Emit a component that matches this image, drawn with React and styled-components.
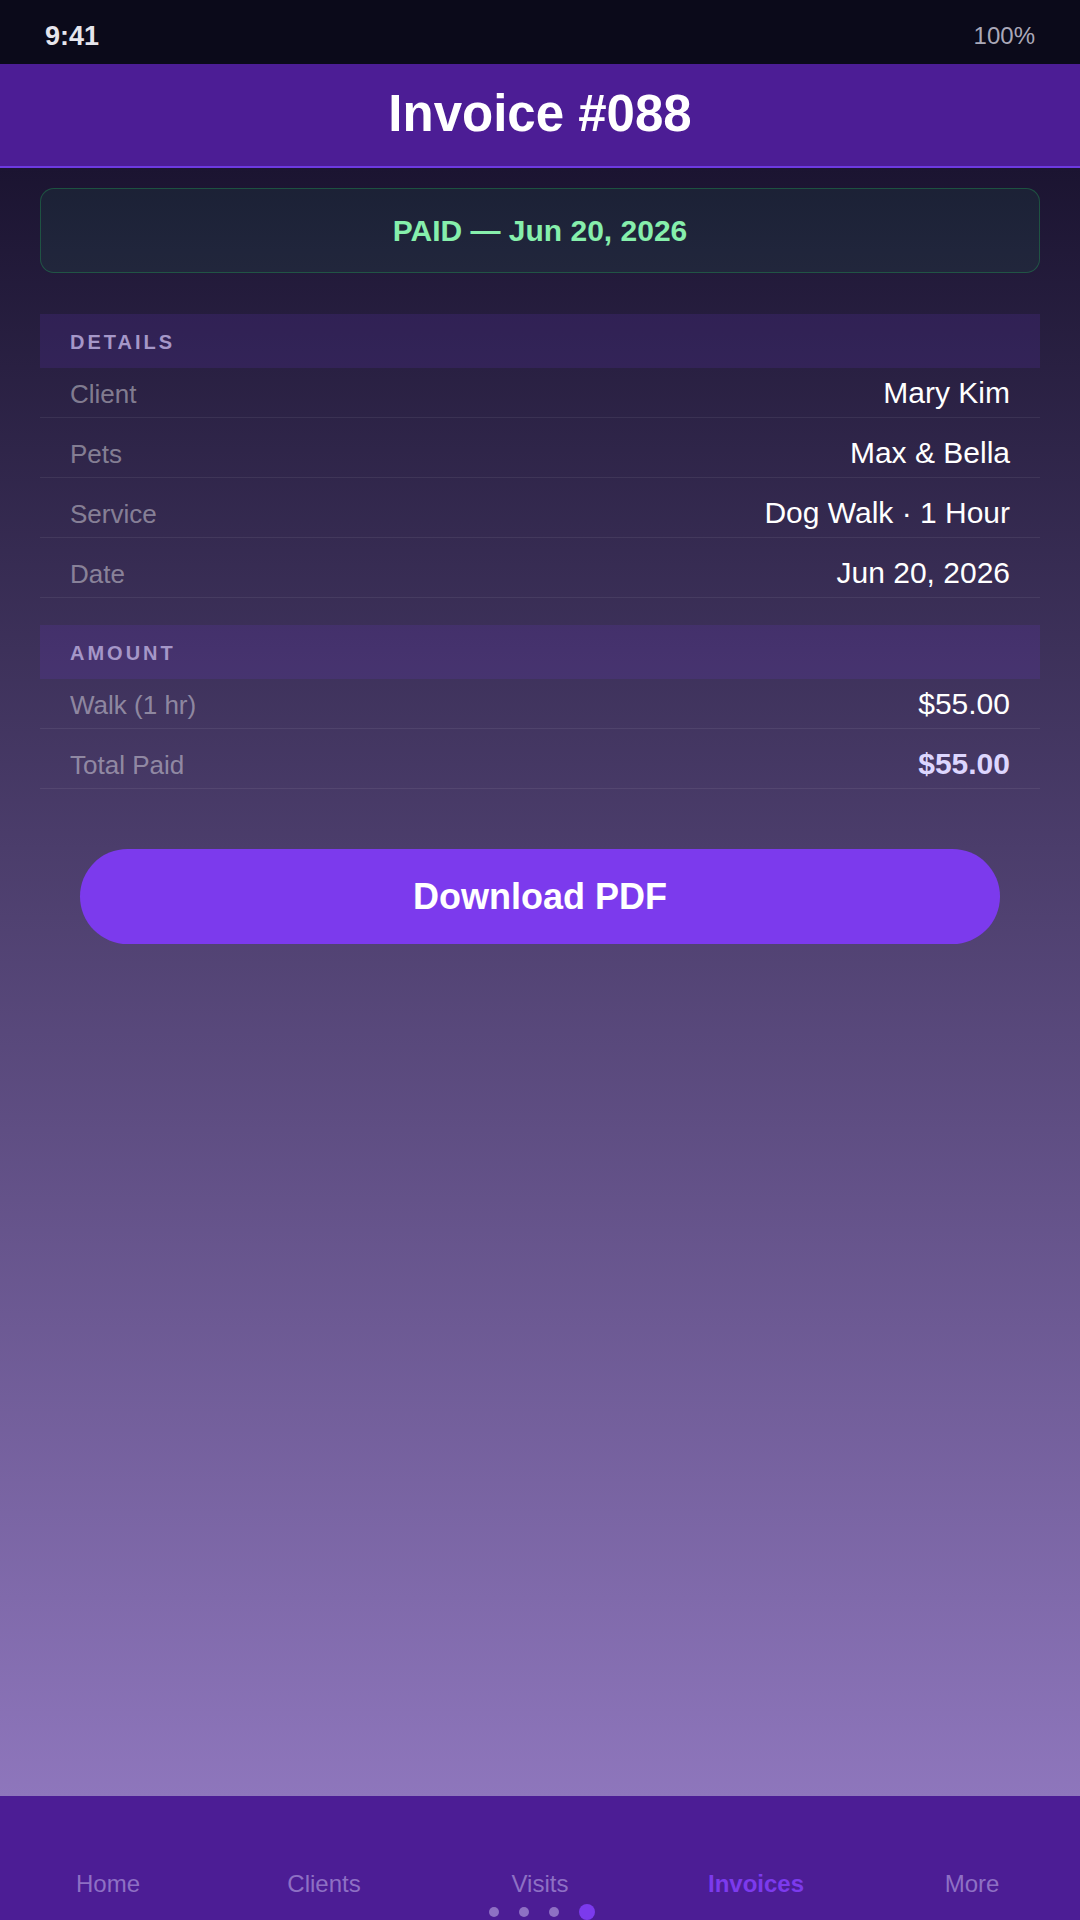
import React from 'react';
import styled, { createGlobalStyle } from 'styled-components';

const GlobalStyle = createGlobalStyle`
  * { box-sizing: border-box; }
  body {
    margin: 0;
    font-family: "Liberation Sans", Arial, sans-serif;
    background: #0b0a1a;
  }
`;

const Screen = styled.div`
  width: 1080px;
  height: 1920px;
  display: flex;
  flex-direction: column;
  overflow: hidden;
`;

const StatusBar = styled.div`
  height: 64px;
  flex: none;
  background: #0b0a1a;
  display: flex;
  align-items: center;
  justify-content: space-between;
  padding: 8px 45px 0;
`;

const Clock = styled.span`
  font-size: 27px;
  font-weight: 700;
  color: #e6e5ec;
`;

const Battery = styled.span`
  font-size: 24px;
  color: #aaa8b8;
`;

const Header = styled.header`
  height: 104px;
  flex: none;
  background: #4c1d95;
  border-bottom: 2px solid #6d3ae0;
  display: flex;
  align-items: center;
  justify-content: center;
  padding-bottom: 4px;
`;

const Title = styled.h1`
  margin: 0;
  font-size: 51px;
  font-weight: 700;
  color: #ffffff;
`;

const Content = styled.main`
  flex: 1;
  background: linear-gradient(180deg, #1b1431 0%, #8e76bc 100%);
  padding: 20px 40px 0;
`;

const PaidBanner = styled.div`
  height: 85px;
  border-radius: 14px;
  background: rgba(34, 197, 94, 0.07);
  border: 1.5px solid rgba(34, 197, 94, 0.3);
  display: flex;
  align-items: center;
  justify-content: center;
  font-size: 30px;
  font-weight: 700;
  color: #86efac;
  margin-bottom: 41px;
`;

const Section = styled.section`
  & + & {
    margin-top: 27px;
  }
`;

const SectionTitle = styled.div`
  height: 54px;
  display: flex;
  align-items: center;
  padding: 2px 30px 0;
  background: rgba(124, 58, 237, 0.13);
  font-size: 20px;
  font-weight: 700;
  letter-spacing: 3px;
  color: #a597c8;
`;

const Row = styled.div`
  height: ${(p) => (p.$first ? '50px' : '60px')};
  padding: ${(p) => (p.$first ? '8px' : '18px')} 30px 0;
  display: flex;
  align-items: baseline;
  justify-content: space-between;
  border-bottom: 1px solid rgba(255, 255, 255, 0.07);
`;

const Label = styled.span`
  font-size: 26px;
  line-height: 34px;
  color: rgba(255, 255, 255, 0.42);
`;

const Value = styled.span`
  font-size: 30px;
  line-height: 34px;
  color: ${(p) => (p.$strong ? '#ddd6fe' : '#ffffff')};
  font-weight: ${(p) => (p.$strong ? 700 : 400)};
`;

const DownloadButton = styled.button`
  display: flex;
  align-items: center;
  justify-content: center;
  width: 920px;
  height: 95px;
  margin: 60px auto 0;
  border: none;
  border-radius: 48px;
  background: #7c3aed;
  color: #ffffff;
  font-family: inherit;
  font-size: 36px;
  font-weight: 700;
`;

const NavBar = styled.nav`
  height: 124px;
  flex: none;
  background: #4c1d95;
  display: flex;
  flex-direction: column;
  justify-content: flex-end;
`;

const Tabs = styled.div`
  display: grid;
  grid-template-columns: repeat(5, 1fr);
  margin-bottom: 6px;
`;

const Tab = styled.span`
  text-align: center;
  font-size: 24px;
  line-height: 28px;
  font-weight: ${(p) => (p.$active ? 700 : 400)};
  color: ${(p) => (p.$active ? '#7c3aed' : '#8e70c4')};
`;

const Dots = styled.div`
  height: 16px;
  display: flex;
  align-items: center;
  justify-content: center;
  gap: 20px;
  padding-left: 4px;
`;

const Dot = styled.span`
  width: ${(p) => (p.$active ? '16px' : '10px')};
  height: ${(p) => (p.$active ? '16px' : '10px')};
  border-radius: 50%;
  background: ${(p) => (p.$active ? '#7c3aed' : '#8e70c4')};
`;

const details = [
  ['Client', 'Mary Kim'],
  ['Pets', 'Max & Bella'],
  ['Service', 'Dog Walk · 1 Hour'],
  ['Date', 'Jun 20, 2026'],
];

const tabs = ['Home', 'Clients', 'Visits', 'Invoices', 'More'];

export default function App() {
  return (
    <Screen>
      <GlobalStyle />
      <StatusBar>
        <Clock>9:41</Clock>
        <Battery>100%</Battery>
      </StatusBar>
      <Header>
        <Title>Invoice #088</Title>
      </Header>
      <Content>
        <PaidBanner>PAID — Jun 20, 2026</PaidBanner>

        <Section>
          <SectionTitle>DETAILS</SectionTitle>
          {details.map(([label, value], i) => (
            <Row key={label} $first={i === 0}>
              <Label>{label}</Label>
              <Value>{value}</Value>
            </Row>
          ))}
        </Section>

        <Section>
          <SectionTitle>AMOUNT</SectionTitle>
          <Row $first>
            <Label>Walk (1 hr)</Label>
            <Value>$55.00</Value>
          </Row>
          <Row>
            <Label>Total Paid</Label>
            <Value $strong>$55.00</Value>
          </Row>
        </Section>

        <DownloadButton>Download PDF</DownloadButton>
      </Content>
      <NavBar>
        <Tabs>
          {tabs.map((t) => (
            <Tab key={t} $active={t === 'Invoices'}>{t}</Tab>
          ))}
        </Tabs>
        <Dots>
          <Dot />
          <Dot />
          <Dot />
          <Dot $active />
        </Dots>
      </NavBar>
    </Screen>
  );
}
